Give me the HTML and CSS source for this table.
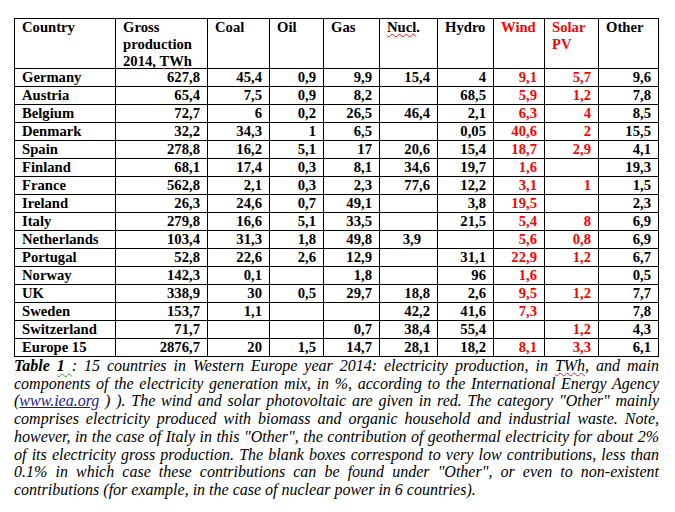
FILE: index.html
```html
<!DOCTYPE html>
<html lang="en">
<head>
<meta charset="utf-8">
<title>Table 1 – Electricity in Western Europe 2014</title>
<link rel="stylesheet" href="styles.css">
</head>
<body>
<main class="page">
  <div class="grid" role="table">
    <div class="h">Country</div>
    <div class="h">Gross production 2014, <span class="sp">TWh</span></div>
    <div class="h">Coal</div>
    <div class="h">Oil</div>
    <div class="h">Gas</div>
    <div class="h"><span class="sp">Nucl</span>.</div>
    <div class="h">Hydro</div>
    <div class="h red">Wind</div>
    <div class="h red">Solar PV</div>
    <div class="h">Other</div>

    <div class="c">Germany</div><div class="n">627,8</div><div class="n">45,4</div><div class="n">0,9</div><div class="n">9,9</div><div class="n">15,4</div><div class="n">4</div><div class="n red">9,1</div><div class="n red">5,7</div><div class="n">9,6</div>
    <div class="c">Austria</div><div class="n">65,4</div><div class="n">7,5</div><div class="n">0,9</div><div class="n">8,2</div><div class="n"></div><div class="n">68,5</div><div class="n red">5,9</div><div class="n red">1,2</div><div class="n">7,8</div>
    <div class="c">Belgium</div><div class="n">72,7</div><div class="n">6</div><div class="n">0,2</div><div class="n">26,5</div><div class="n">46,4</div><div class="n">2,1</div><div class="n red">6,3</div><div class="n red">4</div><div class="n">8,5</div>
    <div class="c">Denmark</div><div class="n">32,2</div><div class="n">34,3</div><div class="n">1</div><div class="n">6,5</div><div class="n"></div><div class="n">0,05</div><div class="n red">40,6</div><div class="n red">2</div><div class="n">15,5</div>
    <div class="c">Spain</div><div class="n">278,8</div><div class="n">16,2</div><div class="n">5,1</div><div class="n">17</div><div class="n">20,6</div><div class="n">15,4</div><div class="n red">18,7</div><div class="n red">2,9</div><div class="n">4,1</div>
    <div class="c">Finland</div><div class="n">68,1</div><div class="n">17,4</div><div class="n">0,3</div><div class="n">8,1</div><div class="n">34,6</div><div class="n">19,7</div><div class="n red">1,6</div><div class="n red"></div><div class="n">19,3</div>
    <div class="c">France</div><div class="n">562,8</div><div class="n">2,1</div><div class="n">0,3</div><div class="n">2,3</div><div class="n">77,6</div><div class="n">12,2</div><div class="n red">3,1</div><div class="n red">1</div><div class="n">1,5</div>
    <div class="c">Ireland</div><div class="n">26,3</div><div class="n">24,6</div><div class="n">0,7</div><div class="n">49,1</div><div class="n"></div><div class="n">3,8</div><div class="n red">19,5</div><div class="n red"></div><div class="n">2,3</div>
    <div class="c">Italy</div><div class="n">279,8</div><div class="n">16,6</div><div class="n">5,1</div><div class="n">33,5</div><div class="n"></div><div class="n">21,5</div><div class="n red">5,4</div><div class="n red">8</div><div class="n">6,9</div>
    <div class="c">Netherlands</div><div class="n">103,4</div><div class="n">31,3</div><div class="n">1,8</div><div class="n">49,8</div><div class="n inset">3,9</div><div class="n"></div><div class="n red">5,6</div><div class="n red">0,8</div><div class="n">6,9</div>
    <div class="c">Portugal</div><div class="n">52,8</div><div class="n">22,6</div><div class="n">2,6</div><div class="n">12,9</div><div class="n"></div><div class="n">31,1</div><div class="n red">22,9</div><div class="n red">1,2</div><div class="n">6,7</div>
    <div class="c">Norway</div><div class="n">142,3</div><div class="n">0,1</div><div class="n"></div><div class="n">1,8</div><div class="n"></div><div class="n">96</div><div class="n red">1,6</div><div class="n red"></div><div class="n">0,5</div>
    <div class="c">UK</div><div class="n">338,9</div><div class="n">30</div><div class="n">0,5</div><div class="n">29,7</div><div class="n">18,8</div><div class="n">2,6</div><div class="n red">9,5</div><div class="n red">1,2</div><div class="n">7,7</div>
    <div class="c">Sweden</div><div class="n">153,7</div><div class="n">1,1</div><div class="n"></div><div class="n"></div><div class="n">42,2</div><div class="n">41,6</div><div class="n red">7,3</div><div class="n red"></div><div class="n">7,8</div>
    <div class="c">Switzerland</div><div class="n">71,7</div><div class="n"></div><div class="n"></div><div class="n">0,7</div><div class="n">38,4</div><div class="n">55,4</div><div class="n red"></div><div class="n red">1,2</div><div class="n">4,3</div>
    <div class="c">Europe 15</div><div class="n">2876,7</div><div class="n">20</div><div class="n">1,5</div><div class="n">14,7</div><div class="n">28,1</div><div class="n">18,2</div><div class="n red">8,1</div><div class="n red">3,3</div><div class="n">6,1</div>
  </div>

  <p class="caption">
    <span class="ln"><b>Table <span class="gr">1 </span></b>: 15 countries in Western Europe year 2014: electricity production, in <span class="sp">TWh</span>, and main</span>
    <span class="ln">components of the electricity generation mix, in %, according to the International Energy Agency</span>
    <span class="ln">(<a href="#">www.iea.org</a> ) ). The wind and solar photovoltaic are given in red. The category "Other" mainly</span>
    <span class="ln">comprises electricity produced with biomass and organic household and industrial waste. Note,</span>
    <span class="ln">however, in the case of Italy in this "Other", the contribution of geothermal electricity for about 2%</span>
    <span class="ln">of its electricity gross production. The blank boxes correspond to very low contributions, less than</span>
    <span class="ln">0.1% in which case these contributions can be found under "Other", or even to non-existent</span>
    <span class="ln last">contributions (for example, in the case of nuclear power in 6 countries).</span>
  </p>
</main>
</body>
</html>
```

FILE: styles.css
```css
html, body {
  margin: 0;
  padding: 0;
  background: #fff;
}

.page {
  padding: 18px 0 0 14px;
  font-family: "Liberation Serif", "Times New Roman", serif;
  color: #000;
}

.grid {
  display: grid;
  grid-template-columns: 100px 91px 61px 53px 55px 57px 55px 50px 53px 59px;
  grid-template-rows: 49px repeat(16, 17px);
  gap: 1px;
  width: max-content;
  background: #000;
  border: 1px solid #000;
  font-weight: bold;
  font-size: 14.67px;
  line-height: 17px;
}

.grid > div {
  background: #fff;
  padding: 0 7px;
  white-space: nowrap;
}

.grid > .h {
  text-align: left;
  white-space: normal;
  line-height: 17px;
}

.c {
  text-align: left;
}

.n {
  text-align: right;
}

.grid > .inset {
  padding-right: 16px;
}

.red {
  color: #f00;
}

.sp {
  text-decoration: underline wavy #e02020;
  text-decoration-thickness: 1px;
  text-underline-offset: 1px;
}

.caption {
  margin: 0;
  width: 645px;
  font-style: italic;
  font-size: 16px;
  line-height: 17.7px;
}

.ln {
  display: block;
  white-space: nowrap;
  text-align: justify;
  text-align-last: justify;
}

.ln.last {
  text-align-last: left;
}

.gr {
  text-decoration: underline wavy #3a9a3a;
  text-decoration-thickness: 1px;
  text-underline-offset: 2px;
}

.caption a {
  color: #1a1a8c;
  text-decoration: underline;
}
```
